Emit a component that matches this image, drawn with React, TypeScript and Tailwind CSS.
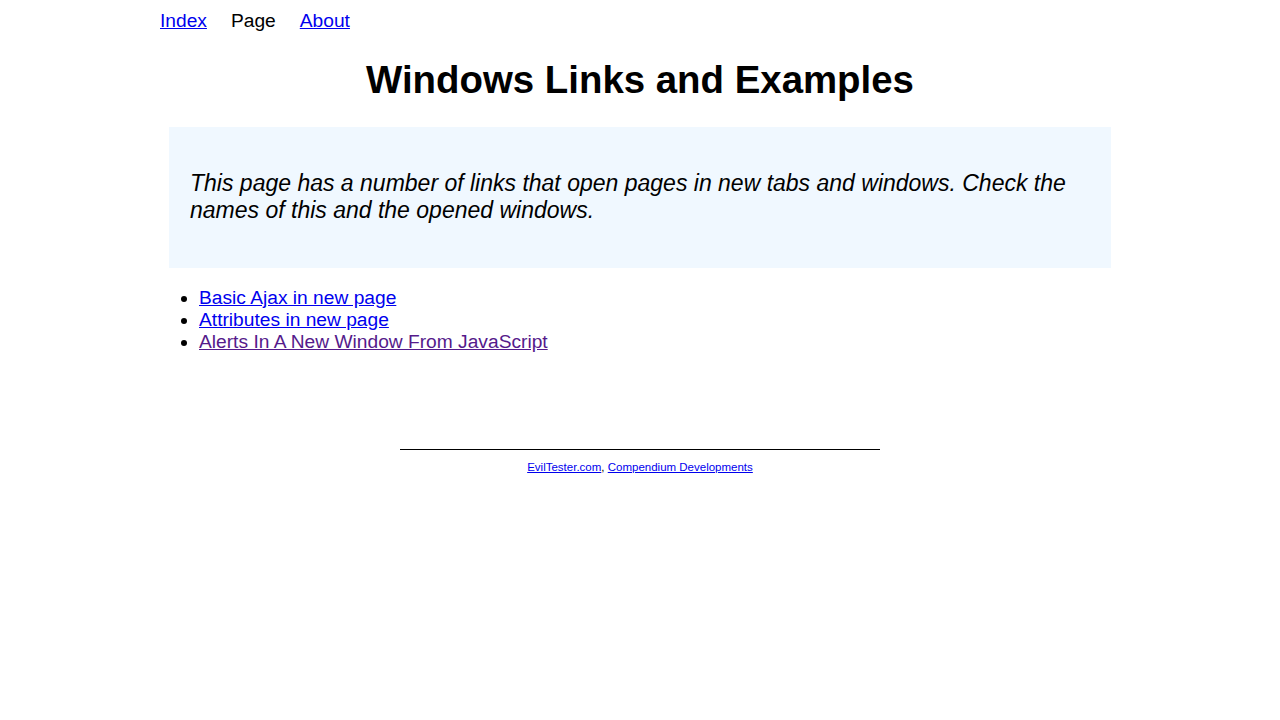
export default function App() {
  return (
    <div className="min-h-screen bg-white text-black font-['Liberation_Sans',Arial,sans-serif] text-[19.2px]">
      <div className="w-[960px] mx-auto">
        <nav className="flex gap-[24px] pt-[10px] leading-[22px]">
          <a href="#" className="text-[#0000ee] underline">Index</a>
          <span>Page</span>
          <a href="#" className="text-[#0000ee] underline">About</a>
        </nav>

        <h1 className="text-center font-bold text-[38.4px] leading-[44px] mt-[26px] mb-[25px]">
          Windows Links and Examples
        </h1>

        <div className="mx-[9px] bg-[#f0f8ff] px-[21px] pt-[20px] pb-[21px]">
          <p className="italic text-[23px] leading-[27px] my-[23px]">
            This page has a number of links that open pages in new tabs and windows. Check the names of this and the opened windows.
          </p>
        </div>

        <ul className="list-disc pl-[39px] mt-[19px] leading-[22px]">
          <li><a href="#" className="text-[#0000ee] underline">Basic Ajax in new page</a></li>
          <li><a href="#" className="text-[#0000ee] underline">Attributes in new page</a></li>
          <li><a href="#" className="text-[#551a8b] underline">Alerts In A New Window From JavaScript</a></li>
        </ul>

        <footer className="mt-[96px] text-center">
          <hr className="w-[480px] mx-auto border-t border-black" />
          <p className="text-[11.5px] leading-[14px] mt-[10px]">
            <a href="#" className="text-[#0000ee] underline">EvilTester.com</a>,{' '}
            <a href="#" className="text-[#0000ee] underline">Compendium Developments</a>
          </p>
        </footer>
      </div>
    </div>
  );
}
